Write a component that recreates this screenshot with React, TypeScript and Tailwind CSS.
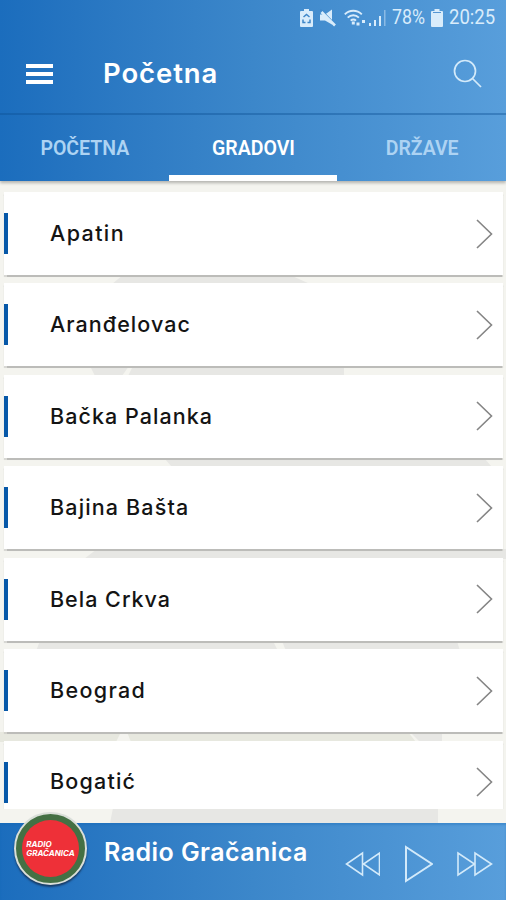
import { useState } from 'react'
import type { ReactNode } from 'react'

type City = {
  name: string
  tracking: string
}

const CITIES: City[] = [
  { name: 'Apatin', tracking: 'tracking-[1.4px]' },
  { name: 'Aranđelovac', tracking: 'tracking-[1.05px]' },
  { name: 'Bačka Palanka', tracking: 'tracking-[1.05px]' },
  { name: 'Bajina Bašta', tracking: 'tracking-[1.15px]' },
  { name: 'Bela Crkva', tracking: 'tracking-[1px]' },
  { name: 'Beograd', tracking: 'tracking-[1.35px]' },
  { name: 'Bogatić', tracking: 'tracking-[1.2px]' },
]

const TABS = ['POČETNA', 'GRADOVI', 'DRŽAVE']

function StatusBar() {
  return (
    <div className="flex h-9 items-center justify-end pr-[11px] font-[Roboto,sans-serif] text-[#d9ecfb]">
      {/* battery saver */}
      <svg className="mr-[7px]" width="13" height="18" viewBox="0 0 13 18" fill="currentColor">
        <path d="M4 0h5v2h3a1 1 0 0 1 1 1v14a1 1 0 0 1-1 1H1a1 1 0 0 1-1-1V3a1 1 0 0 1 1-1h3z" />
        <path d="M3.5 8 6.5 5.5 9.5 8M3 10.500v3h2.500M10 10.500v3H7.500" fill="none" stroke="#3f86c8" strokeWidth="1.500" />
      </svg>
      {/* muted speaker */}
      <svg className="mr-[8px]" width="16" height="18" viewBox="0 0 16 18" fill="currentColor">
        <path d="M0 5.500h5l7-5v15l-7-4H0z" />
        <path d="M0 0 15 15.500" stroke="#4189cb" strokeWidth="2" />
        <path d="M1.500 3 15 16.500" stroke="currentColor" strokeWidth="2.600" />
      </svg>
      {/* wifi */}
      <svg className="mr-[3px]" width="22" height="18" viewBox="0 0 22 18" fill="none" stroke="currentColor" strokeWidth="1.900">
        <path d="M.8 5.300C5.500.5 13 .5 17.800 5.300M3.700 8.600c3.200-3.200 8-3.200 11.200 0M6.700 11.700c1.600-1.600 3.700-1.600 5.300 0" />
        <path d="M9.300 12.500v3M14 13.500v3M19.500 11v3" strokeWidth="3" />
      </svg>
      {/* signal */}
      <svg className="mr-[6px]" width="17" height="18" viewBox="0 0 17 18" fill="currentColor">
        <path d="M0 14h2v3H0zM5 11h2v6H5zM10 7h2v10h-2z" />
        <path d="M15 1h1.500v16H15z" opacity=".45" />
      </svg>
      <span className="w-[34px] text-[19.500px] leading-none">
        <span className="inline-block origin-left scale-x-[.91]">78%</span>
      </span>
      <svg className="mr-[6px] ml-[5px]" width="12" height="18" viewBox="0 0 12 18" fill="currentColor">
        <path d="M3.500 0h5v2H11a1 1 0 0 1 1 1v14a1 1 0 0 1-1 1H1a1 1 0 0 1-1-1V3a1 1 0 0 1 1-1h2.500z" />
        <path d="M2 3.500h8" stroke="#5596d3" />
      </svg>
      <span className="w-[46px] text-[19.500px] leading-none">
        <span className="inline-block origin-left scale-x-[.95]">20:25</span>
      </span>
    </div>
  )
}

function Header() {
  return (
    <header className="h-[115px] border-b-2 border-[#0c4f93]/40">
      <StatusBar />
      <div className="flex h-[75px] items-center pl-[26px] pr-[24px]">
        <button aria-label="Meni" className="flex w-[27px] flex-col gap-[4px]">
          <span className="h-[4px] bg-white" />
          <span className="h-[4px] bg-white" />
          <span className="h-[4px] bg-white" />
        </button>
        <h1 className="ml-[50px] text-[27.500px] leading-none font-semibold tracking-[.9px] text-white">Početna</h1>
        <button aria-label="Traži" className="ml-auto">
          <svg width="29" height="29" viewBox="0 0 29 29" fill="none" stroke="#d3eafa" strokeWidth="1.700">
            <circle cx="12" cy="12" r="10.500" />
            <path d="m19.500 19.500 8.500 8.500" />
          </svg>
        </button>
      </div>
    </header>
  )
}

// Faint angular shapes that show between the cards.
function Backdrop() {
  return (
    <svg className="absolute inset-0 -z-10" width="506" height="642" viewBox="0 181 506 642" fill="#e7e7e4">
      <path d="M112 284 123 275H290L310 284zM90 366h39l-7 10H95zM133 366H344V376H128zM164 458H484L492 467H172zM97 549H506V559H84zM40 641H273l5 10H36zM282 641H457l3 10H286z" />
      <path d="M0 732h121l-5 10H0zM127 732H408l8 10H131z" fill="#e7e8df" />
      <path d="M410 732h32v10h-22zM113 808H438v15H110z" />
    </svg>
  )
}

function CityRow({ city }: { city: City }) {
  return (
    <li className="flex h-[83px] shrink-0 items-center bg-white pr-[10px] shadow-[0_1.500px_1px_#bcbcb9]">
      <span className="h-[41px] w-1 bg-[#0758a8]" />
      <span className={`ml-[42px] text-[21.500px] leading-none font-[550] text-[#141414] ${city.tracking}`}>{city.name}</span>
      <svg className="ml-auto" width="17" height="30" viewBox="0 0 17 30" fill="none" stroke="#858585" strokeWidth="1.600">
        <path d="M1 1 15.500 15 1 29" />
      </svg>
    </li>
  )
}

function Control({ label, children }: { label: string; children: ReactNode }) {
  return (
    <button aria-label={label} className="text-[#d3eafa]">
      {children}
    </button>
  )
}

function Player() {
  return (
    <footer className="relative flex h-[77px] shrink-0 bg-linear-to-r from-[#1b6dbd] via-[#3c87ca] to-[#589edb] shadow-[inset_0_2px_2px_#1467b450]">
      <div className="absolute -top-[11px] left-[14px] flex size-[73px] items-center justify-center rounded-full border-2 border-[#dadfd9] bg-[#447044] shadow-[0_2px_2px_#173b67]">
        <div className="flex size-[57px] items-center justify-center rounded-full bg-[#ee3038]">
          <div className="text-[8px] leading-[9px] font-bold text-white italic">
            RADIO
            <br />
            GRAČANICA
          </div>
        </div>
      </div>
      <div className="ml-[104px] pt-[14px] text-[25px] leading-[30px] font-semibold tracking-[.45px] text-white">Radio Gračanica</div>
      <div className="mr-[13px] ml-auto flex items-center pt-[5px]">
        <Control label="Prethodna">
          <svg width="36" height="26" viewBox="0 0 36 26" fill="none" stroke="currentColor" strokeWidth="1.600">
            <path d="M18.500 2v22L2.500 13zM35.500 2v22L19.500 13z" />
          </svg>
        </Control>
        <Control label="Pusti">
          <svg className="mx-[24px]" width="29" height="38" viewBox="0 0 29 38" fill="none" stroke="currentColor" strokeWidth="2">
            <path d="M2 2v34L28 19z" />
          </svg>
        </Control>
        <Control label="Sledeća">
          <svg width="36" height="26" viewBox="0 0 36 26" fill="none" stroke="currentColor" strokeWidth="1.600">
            <path d="M1 2v22l16.500-11zM18 2v22l16.500-11z" />
          </svg>
        </Control>
      </div>
    </footer>
  )
}

export default function App() {
  const [active, setActive] = useState('GRADOVI')

  return (
    <div className="flex h-[900px] w-[506px] flex-col overflow-hidden bg-[#f4f4ef] font-[Inter,sans-serif]">
      <div className="relative z-10 shrink-0 bg-linear-to-r from-[#1b6dbd] via-[#3c87ca] to-[#589edb] shadow-[0_2px_3px_#00000045]">
        <Header />
        <nav className="grid h-[66px] grid-cols-3 font-[Roboto,sans-serif]">
          {TABS.map(tab => (
            <button
              key={tab}
              onClick={() => setActive(tab)}
              className={
                tab === active
                  ? 'border-b-[6px] border-white pt-[7px] pl-px text-[19.500px] font-semibold text-white'
                  : 'border-b-[6px] border-transparent pt-[7px] pl-px text-[19.500px] font-semibold text-[#add3f3]'
              }
            >
              {tab}
            </button>
          ))}
        </nav>
      </div>

      <main className="relative isolate h-[642px] shrink-0 pt-[11px] pb-[14px]">
        <Backdrop />
        <ul className="flex h-[617px] flex-col gap-[8.450px] overflow-hidden pr-[3px] pl-1">
          {CITIES.map(city => (
            <CityRow key={city.name} city={city} />
          ))}
        </ul>
      </main>
      <Player />
    </div>
  )
}
